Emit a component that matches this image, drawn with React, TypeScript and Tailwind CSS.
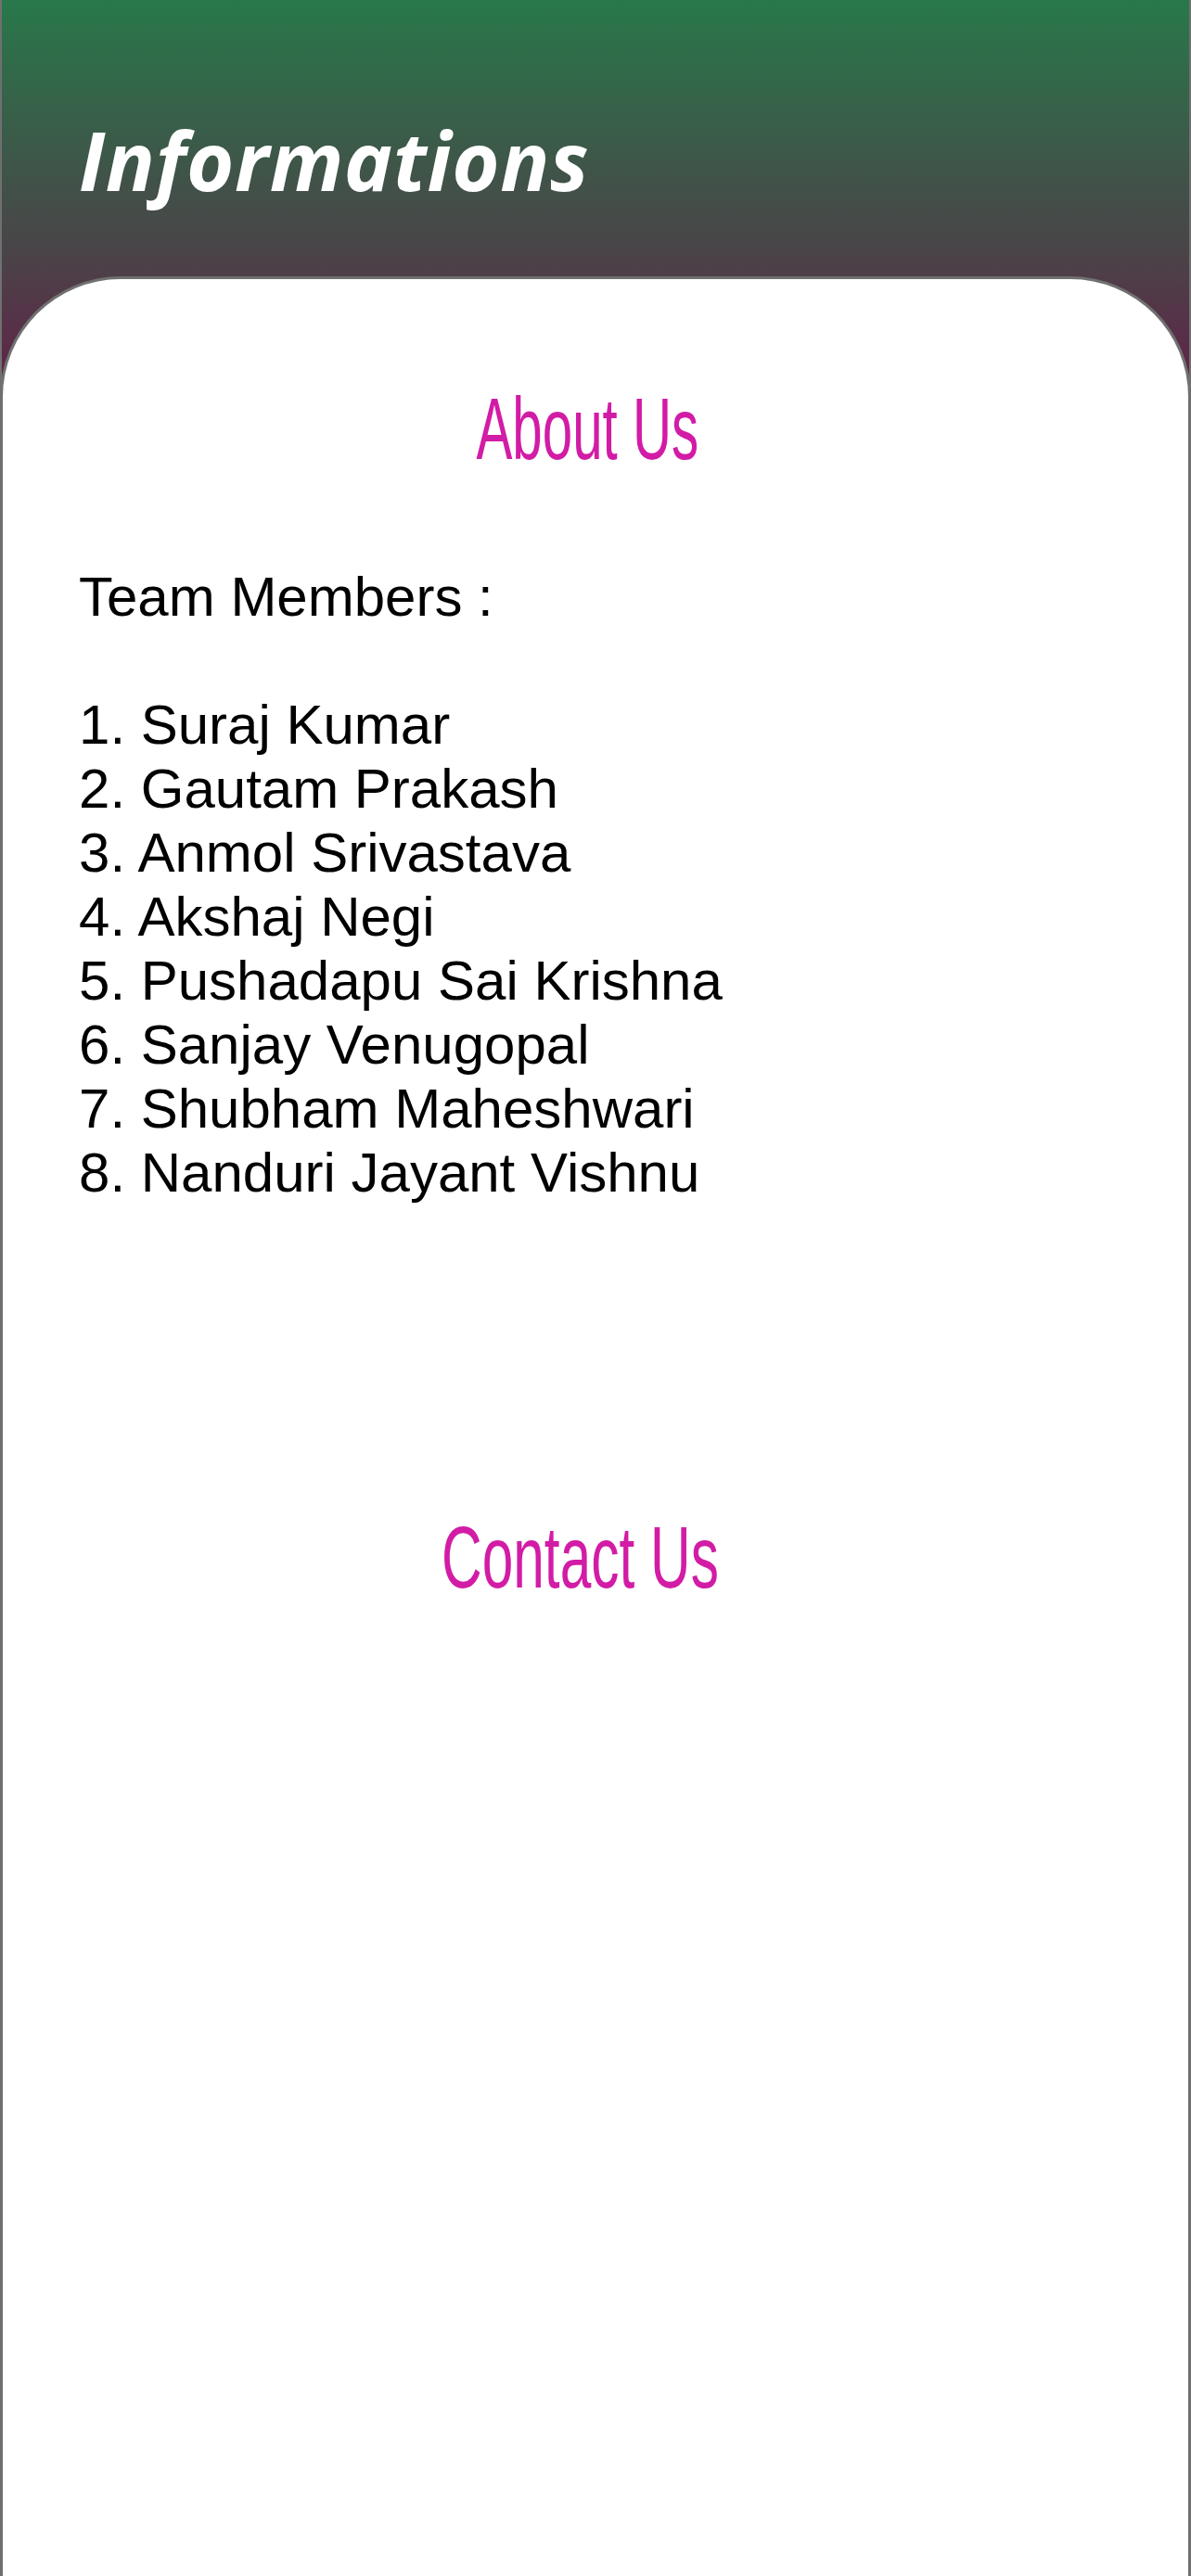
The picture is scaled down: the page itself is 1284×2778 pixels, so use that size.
import React from 'react';

const members = [
  'Suraj Kumar',
  'Gautam Prakash',
  'Anmol Srivastava',
  'Akshaj Negi',
  'Pushadapu Sai Krishna',
  'Sanjay Venugopal',
  'Shubham Maheshwari',
  'Nanduri Jayant Vishnu',
];

const App = () => {
  return (
    <div className="min-h-[2778px] w-full flex flex-col border-x-2 border-[#707070] bg-[linear-gradient(180deg,#28784a_0px,#4a4448_270px,#622049_430px,#622049_100%)]">
      {/* header */}
      <div className="h-[298px] shrink-0 pt-[114px] px-[83px]">
        <h1 className="text-white text-[88px] leading-[117px] font-bold italic font-['Open_Sans',sans-serif] tracking-[0.6px]">
          Informations
        </h1>
      </div>

      {/* card */}
      <div className="flex-1 -mx-[2px] bg-white border-[3px] border-b-0 border-[#707070] rounded-t-[130px]">
        <div className="pt-[107px] flex justify-center pr-[18px]">
          <h2 className="inline-block scale-x-[0.62] text-[#d21ca6] text-[94px] leading-[109px] font-['Liberation_Sans',Arial,sans-serif] whitespace-nowrap">
            About Us
          </h2>
        </div>

        <div className="mt-[92px] pl-[82px] text-black text-[60px] leading-[69px] font-['Liberation_Sans',Arial,sans-serif]">
          <p>Team Members :</p>
          <p>&nbsp;</p>
          {members.map((name, i) => (
            <p key={name}>
              {i + 1}. {name}
            </p>
          ))}
        </div>

        <div className="mt-[326px] flex justify-center pr-[33px]">
          <h2 className="inline-block scale-x-[0.643] text-[#d21ca6] text-[94px] leading-[109px] font-['Liberation_Sans',Arial,sans-serif] whitespace-nowrap">
            Contact Us
          </h2>
        </div>
      </div>
    </div>
  );
};

export default App;
